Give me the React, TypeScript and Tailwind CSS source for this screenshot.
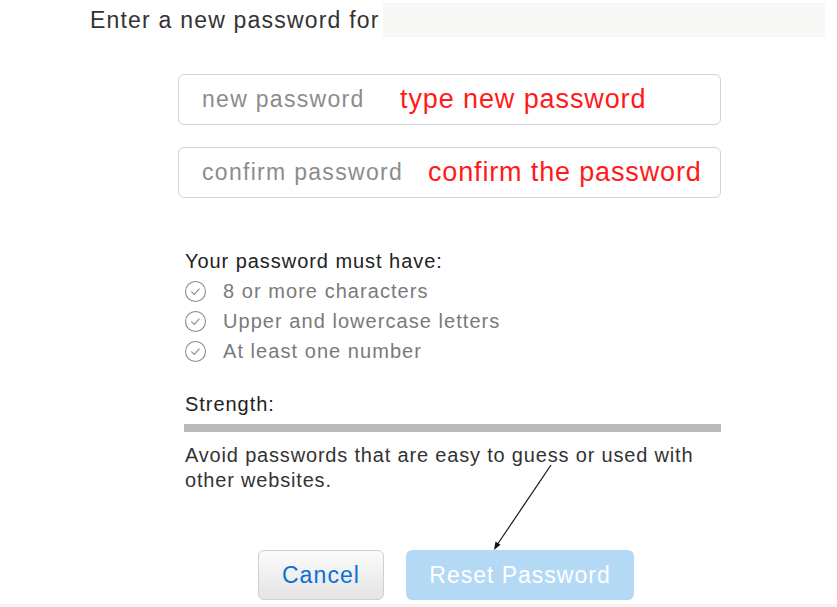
import React from "react";

const rules = ["8 or more characters", "Upper and lowercase letters", "At least one number"];

function CheckCircle() {
  return (
    <svg width="23" height="23" viewBox="0 0 23 23" className="shrink-0">
      <circle cx="11.5" cy="11.5" r="10" fill="none" stroke="#8a8a8a" strokeWidth="1.1" />
      <path d="M7.6 11.8 L10.3 14.3 L15.2 8.9" fill="none" stroke="#8a8a8a" strokeWidth="1.1" strokeLinecap="round" strokeLinejoin="round" />
    </svg>
  );
}

export default function App() {
  return (
    <div className="relative w-[837px] h-[607px] overflow-hidden bg-white font-['Liberation_Sans',Arial,sans-serif]">
      {/* header */}
      <div className="flex items-center h-[34px] mt-[3px] pl-[90px]">
        <span className="text-[23px] text-[#333] tracking-[1.2px] w-[293px]">Enter a new password for</span>
        <div className="w-[442px] h-[34px] bg-[#f7f7f6]" />
      </div>

      <div className="ml-[178px] w-[543px] flex flex-col">
        <div className="mt-[37px] h-[51px] border border-[#d4d4d4] rounded-[6px] flex items-center pl-[23px]">
          <span className="text-[23px] text-[#8c8c8c] tracking-[1.3px] w-[198px]">new password</span>
          <span className="text-[27px] text-[#ff1a1a] tracking-[0.9px]">type new password</span>
        </div>
        <div className="mt-[22px] h-[51px] border border-[#d4d4d4] rounded-[6px] flex items-center pl-[23px]">
          <span className="text-[23px] text-[#8c8c8c] tracking-[1.3px] w-[226px]">confirm password</span>
          <span className="text-[27px] text-[#ff1a1a] tracking-[0.85px]">confirm the password</span>
        </div>

        <div className="mt-[48px] pl-[7px] text-[20px] leading-[30px] tracking-[0.95px] text-[#222]">Your password must have:</div>
        <ul className="pl-[6px]">
          {rules.map(r => (
            <li key={r} className="flex items-center gap-[16px] h-[30px]">
              <CheckCircle />
              <span className="text-[20px] text-[#7a7a7a] tracking-[1.05px]">{r}</span>
            </li>
          ))}
        </ul>

        <div className="mt-[23px] pl-[7px] text-[20px] leading-[30px] tracking-[0.95px] text-[#222]">Strength:</div>
        <div className="ml-[6px] mt-[5px] h-[8px] bg-[#b9b9b9]" />
        <p className="mt-[11px] pl-[7px] pr-[14px] text-[20px] leading-[25px] tracking-[0.82px] text-[#333]">
          Avoid passwords that are easy to guess or used with other websites.
        </p>
      </div>

      <div className="mt-[57px] flex justify-start pl-[258px] gap-[22px]">
        <button className="w-[126px] h-[50px] rounded-[6px] border border-[#cfcfcf] bg-gradient-to-b from-[#fbfbfb] to-[#e4e4e4] text-[23px] tracking-[1.1px] text-[#0b6fd8]">
          Cancel
        </button>
        <button className="w-[228px] h-[50px] rounded-[6px] bg-[#b3d9f5] text-[23px] tracking-[1px] text-white">
          Reset Password
        </button>
      </div>
      <div className="mt-[4px] h-[3px] bg-[#f3f3f3]" />

      {/* annotation arrow */}
      <svg className="absolute left-0 top-0 pointer-events-none" width="837" height="607">
        <line x1="551" y1="465" x2="497" y2="545" stroke="#111" strokeWidth="1.2" />
        <polygon points="494,550 495.5,541.5 500.5,544.8" fill="#111" />
      </svg>
    </div>
  );
}
